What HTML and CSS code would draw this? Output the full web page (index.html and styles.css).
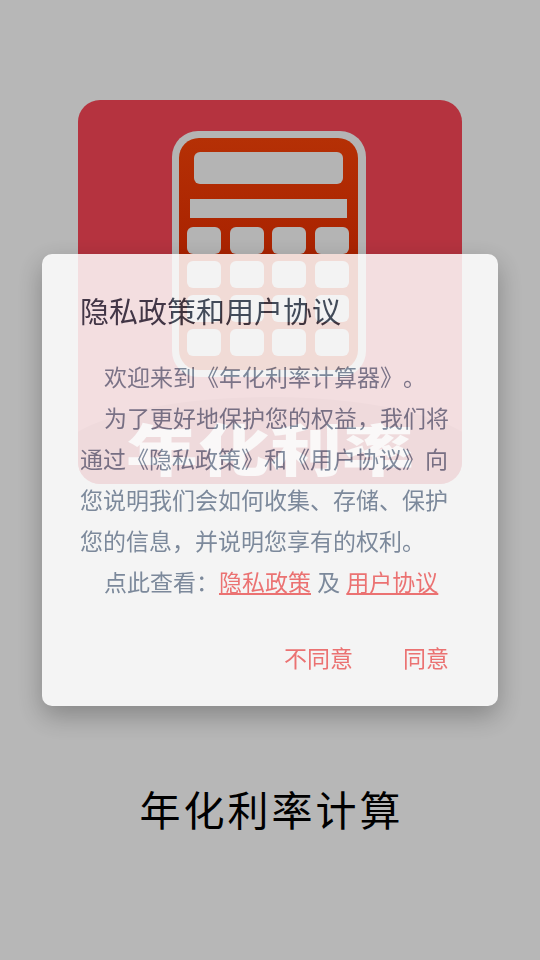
FILE: index.html
```html
<!DOCTYPE html>
<html lang="zh-CN">
<head>
<meta charset="utf-8">
<title>年化利率计算</title>
<link rel="stylesheet" href="styles.css">
</head>
<body>
<main class="splash">
  <svg class="logo" viewBox="0 0 384 384" width="384" height="384" aria-label="年化利率">
    <defs>
      <clipPath id="logo-clip"><rect width="384" height="384" rx="22"/></clipPath>
      <linearGradient id="calc-red" x1="0" y1="0" x2="0" y2="1">
        <stop offset="0" stop-color="#b53005"/>
        <stop offset="0.55" stop-color="#a82100"/>
      </linearGradient>
    </defs>
    <g clip-path="url(#logo-clip)">
      <rect width="384" height="384" fill="#b5333f"/>
      <rect x="94" y="31" width="194" height="246" rx="26" fill="#b4b4b4"/>
      <rect x="101" y="38" width="179" height="232" rx="20" fill="url(#calc-red)"/>
      <rect x="116" y="52" width="149" height="32" rx="6" fill="#b4b4b4"/>
      <rect x="112" y="99" width="157" height="19" fill="#b4b4b4"/>
      <g fill="#b4b4b4">
        <rect x="109" y="127" width="34" height="27" rx="6"/><rect x="152" y="127" width="34" height="27" rx="6"/><rect x="194" y="127" width="34" height="27" rx="6"/><rect x="237" y="127" width="34" height="27" rx="6"/>
        <rect x="109" y="161" width="34" height="27" rx="6"/><rect x="152" y="161" width="34" height="27" rx="6"/><rect x="194" y="161" width="34" height="27" rx="6"/><rect x="237" y="161" width="34" height="27" rx="6"/>
        <rect x="109" y="195" width="34" height="27" rx="6"/><rect x="152" y="195" width="34" height="27" rx="6"/><rect x="194" y="195" width="34" height="27" rx="6"/><rect x="237" y="195" width="34" height="27" rx="6"/>
        <rect x="109" y="229" width="34" height="27" rx="6"/><rect x="152" y="229" width="34" height="27" rx="6"/><rect x="194" y="229" width="34" height="27" rx="6"/><rect x="237" y="229" width="34" height="27" rx="6"/>
      </g>
      <ellipse cx="192" cy="360" rx="215" ry="63" fill="#991c2a"/>
      <text class="logo-text" transform="translate(192 371) scale(1 0.78)" text-anchor="middle">年化利率</text>
    </g>
  </svg>
  <h1 class="app-name">年化利率计算</h1>
</main>
<section class="dialog">
  <h2 class="dialog-title">隐私政策和用户协议</h2>
  <div class="dialog-body">
    <p>欢迎来到《年化利率计算器》。</p>
    <p>为了更好地保护您的权益，我们将通过《隐私政策》和《用户协议》向您说明我们会如何收集、存储、保护您的信息，并说明您享有的权利。</p>
    <p>点此查看：<a class="link" href="#">隐私政策</a> 及 <a class="link" href="#">用户协议</a></p>
  </div>
  <div class="dialog-actions">
    <button class="action">不同意</button>
    <button class="action">同意</button>
  </div>
</section>
</body>
</html>
```

FILE: styles.css
```css
* { box-sizing: border-box; }
html, body { margin: 0; height: 100%; }
body {
  background: #b7b7b7;
  font-family: "Noto Sans CJK SC", "Noto Sans", sans-serif;
  text-spacing-trim: space-all;
  overflow: hidden;
}
.splash {
  display: flex;
  flex-direction: column;
  align-items: center;
  padding-top: 100px;
}
.logo { display: block; }
.logo-text {
  font-family: "Noto Sans CJK SC", sans-serif;
  font-size: 72px;
  font-weight: 900;
  fill: #dcd0d0;
}
.app-name {
  margin: 296px 0 0;
  font-size: 41px;
  line-height: 56px;
  font-weight: 400;
  letter-spacing: 3px;
  color: #000;
  padding-left: 3px;
}
.dialog {
  position: fixed;
  left: 42px;
  top: 254px;
  width: 456px;
  height: 452px;
  padding: 36px 48px 0 38px;
  background: #fff;
  border-radius: 10px;
  opacity: 0.84;
  box-shadow: 0 10px 26px rgba(0, 0, 0, 0.32);
}
.dialog-title {
  margin: 0;
  font-size: 29px;
  line-height: 40px;
  font-weight: 400;
  color: #2d3748;
}
.dialog-body {
  margin-top: 26px;
  font-size: 23px;
  line-height: 41px;
  word-spacing: 1px;
  color: #718096;
}
.dialog-body p { margin: 0; text-indent: 24px; }
.link { color: #f56565; text-decoration: underline; }
.dialog-actions {
  display: flex;
  justify-content: flex-end;
  gap: 50px;
  margin-top: 35px;
  padding-right: 1px;
}
.action {
  padding: 0;
  border: 0;
  background: none;
  font: inherit;
  font-size: 23px;
  line-height: 41px;
  color: #f56565;
}
```
